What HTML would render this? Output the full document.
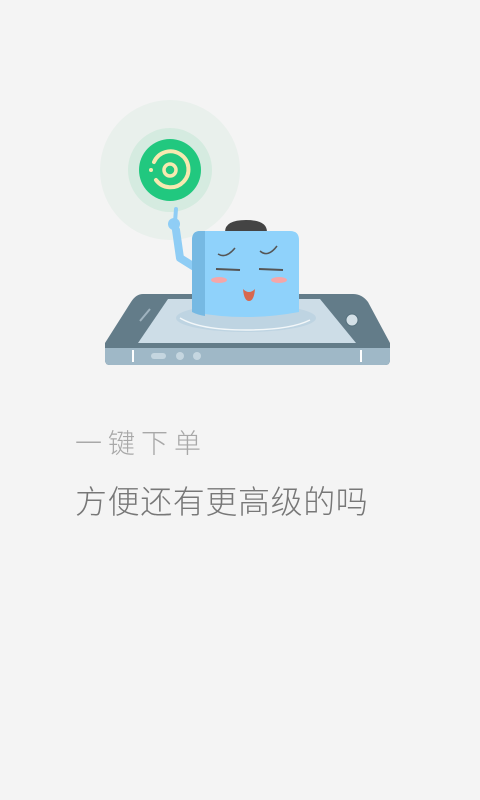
<!DOCTYPE html>
<html><head><meta charset="utf-8"><style>
html,body{margin:0;padding:0;background:#f4f4f4;width:480px;height:800px;overflow:hidden;font-family:"Liberation Sans","Noto Sans CJK SC",sans-serif}
.t1{position:absolute;left:75px;top:422px;font-size:27px;color:#a8a8a8;letter-spacing:6px;font-weight:300}
.t2{position:absolute;left:75px;top:477px;font-size:32px;color:#777;letter-spacing:0.6px;font-weight:300}
</style></head><body>
<svg width="480" height="400" style="position:absolute;left:0;top:0">
<circle cx="170" cy="170" r="70" fill="#e9f0ec"/>
<circle cx="170" cy="170" r="42" fill="#d5ebe0"/>
<circle cx="170" cy="170" r="31" fill="#21c87f"/>
<path d="M154 162 A18 18 0 1 1 156 180" fill="none" stroke="#f7e9b0" stroke-width="4" stroke-linecap="round"/>
<circle cx="170" cy="170" r="6" fill="none" stroke="#f7e9b0" stroke-width="3.5"/>
<circle cx="151" cy="170" r="2" fill="#f7e9b0"/>
<path d="M143 294 L353 294 Q362 294 368 302 L390 343 L390 360 Q390 365 385 365 L110 365 Q105 365 105 360 L105 343 L131 302 Q136 294 143 294Z" fill="#637c89"/>
<path d="M105 348 L390 348 L390 360 Q390 365 385 365 L110 365 Q105 365 105 360Z" fill="#9fb8c7"/>
<path d="M168 299 L320 299 L356 343 L138 343Z" fill="#cddde7"/>
<rect x="132" y="350" width="2" height="12" fill="#fff"/>
<rect x="360" y="350" width="2" height="12" fill="#fff"/>
<rect x="151" y="353" width="15" height="6" rx="3" fill="#c5d6e0"/>
<circle cx="180" cy="356" r="4" fill="#c5d6e0"/>
<circle cx="197" cy="356" r="4" fill="#c5d6e0"/>
<circle cx="352" cy="320" r="6" fill="#d4e0e7" stroke="#55707d" stroke-width="1"/>
<line x1="140" y1="321" x2="150" y2="309" stroke="#9fb3bf" stroke-width="2"/>
<ellipse cx="246" cy="318" rx="70" ry="14" fill="#b8d0df" opacity=".7"/>
<path d="M196 268 L180 258 L176 230" fill="none" stroke="#8fcdf5" stroke-width="8" stroke-linecap="round" stroke-linejoin="round"/>
<circle cx="174" cy="224" r="6" fill="#8fcdf5"/>
<line x1="175" y1="222" x2="176" y2="209" stroke="#8fcdf5" stroke-width="4" stroke-linecap="round"/>
<path d="M225 232 Q225 220 246 220 Q267 220 267 232Z" fill="#444"/>
<path d="M200 231 L290 231 Q299 231 299 240 L299 312 Q246 322 192 312 L192 240 Q192 231 200 231Z" fill="#8fd2fb"/>
<path d="M200 231 L205 231 L205 316 Q198 315 192 312 L192 240 Q192 231 200 231Z" fill="#76b9e3"/>
<path d="M218 254 Q226 259 235 248 M260 251 Q268 258 277 246" fill="none" stroke="#555" stroke-width="1.5"/>
<line x1="216" y1="269" x2="240" y2="270" stroke="#555" stroke-width="2"/>
<line x1="259" y1="269" x2="283" y2="270" stroke="#555" stroke-width="2"/>
<ellipse cx="219" cy="280" rx="8" ry="3" fill="#f5a6a8"/>
<ellipse cx="279" cy="280" rx="8" ry="3" fill="#f5a6a8"/>
<path d="M243 289 Q249 295 255 289 Q254 301 249 301 Q244 301 243 289Z" fill="#d8684e"/>
<path d="M180 318 Q200 330 246 330 Q290 330 310 320" fill="none" stroke="#fff" stroke-width="1.5" opacity=".8"/>
</svg>
<div class="t1">一键下单</div>
<div class="t2">方便还有更高级的吗</div>
</body></html>
